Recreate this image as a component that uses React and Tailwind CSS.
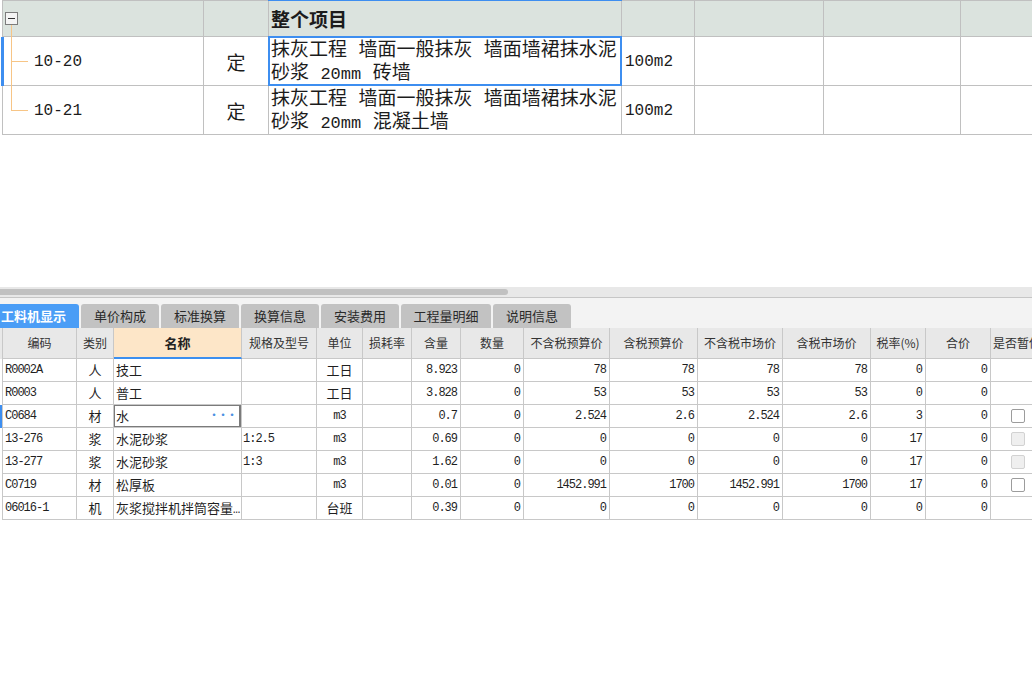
import React from "react";

const mono = "font-['Liberation_Mono','Noto_Sans_CJK_SC',monospace]";
const cjk = "font-['Noto_Sans_CJK_SC',sans-serif]";

const W = [
  "w-[75px] shrink-0 border-l",
  "w-[37px] shrink-0",
  "w-[128px] shrink-0",
  "w-[75px] shrink-0",
  "w-[46px] shrink-0",
  "w-[49px] shrink-0",
  "w-[49px] shrink-0",
  "w-[63px] shrink-0",
  "w-[86px] shrink-0",
  "w-[88px] shrink-0",
  "w-[85px] shrink-0",
  "w-[88px] shrink-0",
  "w-[55px] shrink-0",
  "w-[65px] shrink-0",
  "flex-1 min-w-0",
];

const headers = [
  "编码", "类别", "名称", "规格及型号", "单位", "损耗率", "含量", "数量",
  "不含税预算价", "含税预算价", "不含税市场价", "含税市场价", "税率(%)", "合价", "是否暂估价",
];

const rows = [
  ["R0002A", "人", "技工", "", "工日", "", "8.923", "0", "78", "78", "78", "78", "0", "0", null],
  ["R0003", "人", "普工", "", "工日", "", "3.828", "0", "53", "53", "53", "53", "0", "0", null],
  ["C0684", "材", "水", "", "m3", "", "0.7", "0", "2.524", "2.6", "2.524", "2.6", "3", "0", "on"],
  ["13-276", "浆", "水泥砂浆", "1:2.5", "m3", "", "0.69", "0", "0", "0", "0", "0", "17", "0", "off"],
  ["13-277", "浆", "水泥砂浆", "1:3", "m3", "", "1.62", "0", "0", "0", "0", "0", "17", "0", "off"],
  ["C0719", "材", "松厚板", "", "m3", "", "0.01", "0", "1452.991", "1700", "1452.991", "1700", "17", "0", "on"],
  ["06016-1", "机", "灰浆搅拌机拌筒容量", "", "台班", "", "0.39", "0", "0", "0", "0", "0", "0", "0", null],
];

const tabs = ["单价构成", "标准换算", "换算信息", "安装费用", "工程量明细", "说明信息"];

function DataCell({ i, v, selected, last }) {
  const base = `${W[i]} border-r border-b border-[#c8c8c8] h-full flex items-center overflow-hidden whitespace-nowrap`;
  if (i === 0)
    return <div className={`${base} pl-[2px] ${mono} text-[12px] tracking-[-1px] text-[#1f1f1f]`}>{v}</div>;
  if (i === 1)
    return <div className={`${base} justify-center ${cjk} text-[13px] text-[#1f1f1f]`}>{v}</div>;
  if (i === 2)
    return (
      <div className={`${base} relative pl-[2px] justify-between ${cjk} text-[13px] text-[#1f1f1f]`}>
        <span>
          {v}
          {last && <span className={`${mono} text-[12px] tracking-[-1px]`}>…</span>}
        </span>
        {selected && <span className="pr-[5px] pb-[2px] text-[#4a90e2] text-[10px] tracking-[-1px] font-bold leading-none">···</span>}
        {selected && <span className="absolute left-[-1px] top-[-1px] right-0 bottom-[-1px] border-2 border-[#7b7b7b] pointer-events-none" />}
      </div>
    );
  if (i === 3)
    return <div className={`${base} pl-[1px] ${mono} text-[12px] tracking-[-1px] text-[#1f1f1f]`}>{v}</div>;
  if (i === 4)
    return (
      <div className={`${base} justify-center ${v === "m3" ? `${mono} text-[12px] tracking-[-1px]` : `${cjk} text-[13px]`} text-[#1f1f1f]`}>
        {v}
      </div>
    );
  if (i === 5) return <div className={base} />;
  if (i === 14)
    return (
      <div className={`${W[i]} border-b border-[#c8c8c8] h-full flex items-center pl-[20px]`}>
        {v === "on" && <span className="w-[14px] h-[14px] rounded-[2px] border border-[#9c9c9c] bg-white" />}
        {v === "off" && <span className="w-[14px] h-[14px] rounded-[2px] border border-[#d2d2d2] bg-[#efefef]" />}
      </div>
    );
  return (
    <div className={`${base} justify-end pr-[3px] ${mono} text-[12px] tracking-[-1px] text-[#1f1f1f]`}>{v}</div>
  );
}

export default function App() {
  return (
    <div className="w-[1032px] h-[678px] overflow-hidden bg-white relative">
      {/* Top tree table */}
      <div className="ml-[2px] border-l border-t border-[#c0c0c0] text-[#1c1c1c]">
        {/* header */}
        <div className="flex h-[36px] bg-[#dbe3de] border-b border-[#c0c0c0]">
          <div className="w-[201px] shrink-0 border-r border-[#c0c0c0] pl-[2px] pt-[11px]">
            <div className="w-[13px] h-[13px] border border-[#7c7c7c] bg-[#f4f4f4] flex items-center justify-center">
              <div className="w-[7px] h-px bg-[#333]" />
            </div>
          </div>
          <div className="w-[65px] shrink-0 border-r border-[#c0c0c0]" />
          <div className={`w-[353px] shrink-0 border-r border-[#c0c0c0] relative flex items-center pl-[2px] pt-[2px] ${cjk} text-[19px] font-bold`}>
            整个项目
            <span className="absolute left-[-1px] right-[-1px] top-[-1px] h-px bg-[#3d8ef0]" />
          </div>
          <div className="w-[73px] shrink-0 border-r border-[#c0c0c0]" />
          <div className="w-[129px] shrink-0 border-r border-[#c0c0c0]" />
          <div className="w-[137px] shrink-0 border-r border-[#c0c0c0]" />
          <div className="flex-1" />
        </div>
        {[
          { code: "10-20", l2a: "砂浆", l2b: "砖墙", sel: true },
          { code: "10-21", l2a: "砂浆", l2b: "混凝土墙", sel: false },
        ].map((r) => (
          <div key={r.code} className="flex h-[49px] border-b border-[#c0c0c0]">
            <div className={`w-[201px] shrink-0 border-r border-[#c0c0c0] relative flex items-center pl-[31px] pt-[2px] ${mono} text-[16px]`}>
              {r.code}
              {r.sel && <span className="absolute left-[-2px] top-0 bottom-[-1px] w-[3px] bg-[#3d8ef0]" />}
            </div>
            <div className={`w-[65px] shrink-0 border-r border-[#c0c0c0] flex items-center justify-center pt-[2px] ${cjk} text-[19px]`}>
              定
            </div>
            <div className={`w-[353px] shrink-0 border-r border-[#c0c0c0] relative flex flex-col pl-[2px] pt-[3px] ${mono} text-[19px] leading-[23px] whitespace-nowrap`}>
              <div>抹灰工程 墙面一般抹灰 墙面墙裙抹水泥</div>
              <div>
                {r.l2a} <span className="text-[17px]">20mm</span> {r.l2b}
              </div>
              {r.sel && (
                <span className="absolute left-[-1px] top-[-1px] right-[-1px] bottom-[-1px] border-2 border-[#3d8ef0] pointer-events-none" />
              )}
            </div>
            <div className={`w-[73px] shrink-0 border-r border-[#c0c0c0] flex items-center pl-[3px] pt-[2px] ${mono} text-[16px]`}>
              100m2
            </div>
            <div className="w-[129px] shrink-0 border-r border-[#c0c0c0]" />
            <div className="w-[137px] shrink-0 border-r border-[#c0c0c0]" />
            <div className="flex-1" />
          </div>
        ))}
      </div>

      {/* tree lines */}
      <svg className="absolute left-0 top-0 pointer-events-none" width="40" height="120">
        <line x1="11.5" y1="25" x2="11.5" y2="110.5" stroke="#f7c586" strokeWidth="1" />
        <line x1="11" y1="61.5" x2="28" y2="61.5" stroke="#f7c586" strokeWidth="1" />
        <line x1="11" y1="110.5" x2="28" y2="110.5" stroke="#f7c586" strokeWidth="1" />
      </svg>

      {/* empty space */}
      <div className="h-[152px]" />

      {/* horizontal scrollbar */}
      <div className="h-[10px] bg-[#e8e8e8] pt-[2px]">
        <div className="w-[508px] h-[6px] rounded-r-full bg-[#c1c1c1]" />
      </div>
      <div className="h-px bg-[#c6c6c6]" />

      {/* tabs */}
      <div className={`h-[30px] bg-[#f3f3f3] flex items-end gap-[2px] overflow-hidden ${cjk} text-[13px]`}>
        <div className="ml-[-12px] w-[91px] h-[24px] shrink-0 rounded-t-[3px] bg-[#4a9df6] text-white font-bold flex items-center justify-center">
          工料机显示
        </div>
        {tabs.map((t) => (
          <div
            key={t}
            className={`${t === "工程量明细" ? "w-[90px]" : "w-[78px]"} h-[24px] shrink-0 rounded-t-[3px] bg-[#c2c2c2] text-[#2a2a2a] flex items-center justify-center`}
          >
            {t}
          </div>
        ))}
      </div>

      {/* bottom grid header */}
      <div className={`flex h-[31px] bg-[#e8e8e8] ${cjk} text-[12px] text-[#333]`}>
        <div className="w-[2px] shrink-0" />
        {headers.map((h, i) =>
          i === 2 ? (
            <div
              key={h}
              className={`${W[i]} bg-[#fde6c8] border-r border-r-[#c8c8c8] border-b-2 border-b-[#3c8fef] flex items-center justify-center font-bold text-[13px] text-[#222]`}
            >
              {h}
            </div>
          ) : (
            <div
              key={h}
              className={`${W[i]} ${i === 14 ? "" : "border-r"} border-b border-[#c8c8c8] flex items-center ${i === 14 ? "pl-[2px]" : "justify-center"} whitespace-nowrap overflow-hidden`}
            >
              {h}
            </div>
          )
        )}
      </div>

      {/* bottom grid rows */}
      {rows.map((r, ri) => (
        <div key={ri} className="flex h-[23px]">
          <div className={`w-[2px] shrink-0 ${ri === 2 ? "bg-[#3d8ef0]" : ""}`} />
          {r.map((v, i) => (
            <DataCell key={i} i={i} v={v} selected={ri === 2} last={ri === 6} />
          ))}
        </div>
      ))}
    </div>
  );
}
